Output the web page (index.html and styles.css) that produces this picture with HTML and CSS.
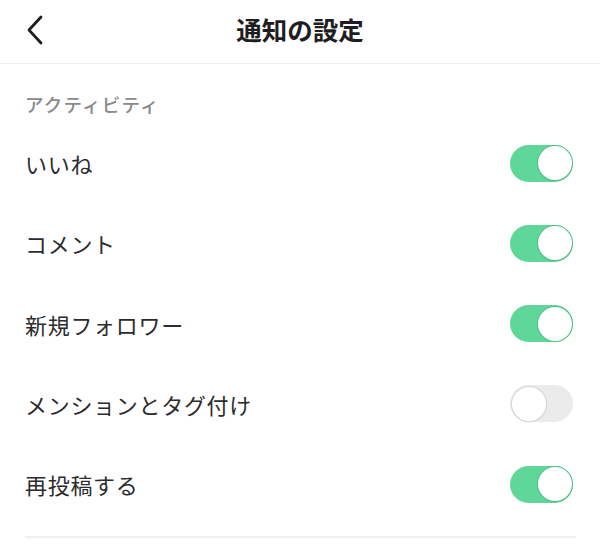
FILE: index.html
```html
<!DOCTYPE html>
<html lang="ja">
<head>
<meta charset="utf-8">
<link rel="stylesheet" href="styles.css">
</head>
<body>
<div class="app">
  <header class="header">
    <button class="back" aria-label="戻る">
      <svg width="20" height="30" viewBox="0 0 20 30"><path d="M16 2 L4 15 L16 28" fill="none" stroke="#1e1e1e" stroke-width="2.8" stroke-linecap="round" stroke-linejoin="round"/></svg>
    </button>
    <h1 class="title">通知の設定</h1>
  </header>
  <div class="section-label">アクティビティ</div>
  <ul class="list">
    <li class="row"><span class="label">いいね</span><span class="toggle on"><span class="knob"></span></span></li>
    <li class="row"><span class="label">コメント</span><span class="toggle on"><span class="knob"></span></span></li>
    <li class="row"><span class="label">新規フォロワー</span><span class="toggle on"><span class="knob"></span></span></li>
    <li class="row"><span class="label">メンションとタグ付け</span><span class="toggle"><span class="knob"></span></span></li>
    <li class="row"><span class="label">再投稿する</span><span class="toggle on"><span class="knob"></span></span></li>
  </ul>
  <div class="divider"></div>
</div>
</body>
</html>
```

FILE: styles.css
```css
* { box-sizing: border-box; }
html, body { margin: 0; padding: 0; background: #ffffff; }
body {
  font-family: "Noto Sans CJK JP", "Noto Sans", sans-serif;
  color: #2a2a2a;
}
.app { width: 600px; }
.header {
  height: 64px;
  border-bottom: 1.5px solid #eeeeee;
  display: flex;
  align-items: center;
  justify-content: center;
  position: relative;
}
.back {
  position: absolute;
  left: 25px;
  top: 15px;
  width: 20px;
  height: 30px;
  padding: 0;
  border: none;
  background: none;
  display: flex;
}
.title {
  margin: 0;
  font-size: 25.5px;
  font-weight: 700;
  color: #1e1e22;
  line-height: 1;
  margin-top: -5px;
}
.section-label {
  padding: 28px 25px 7px;
  font-size: 18.5px;
  font-weight: 500;
  line-height: 24px;
  letter-spacing: 1.2px;
  color: #8a8a8a;
}
.list { list-style: none; margin: 0; padding: 0; }
.row {
  height: 80.25px;
  display: flex;
  align-items: center;
  justify-content: space-between;
  padding: 0 27px 0 25px;
}
.label {
  font-size: 22px;
  letter-spacing: 0.7px;
  color: #2c2c2e;
}
.toggle {
  width: 63px;
  height: 37px;
  border-radius: 19px;
  background: #ebebeb;
  display: flex;
  align-items: center;
  padding: 1.5px;
}
.toggle.on { background: #5fd69a; justify-content: flex-end; }
.knob {
  width: 34px;
  height: 34px;
  border-radius: 50%;
  background: #fff;
  box-shadow: 0 0 0 1px #d6d6d6, 0 1px 2px rgba(0,0,0,0.12);
}
.toggle.on .knob { box-shadow: 0 0 0 1px #4fc488, 0 1px 2px rgba(0,0,0,0.08); }
.divider {
  margin: 12px 24px 0 25px;
  height: 2px;
  background: #f0f0f0;
}
```
